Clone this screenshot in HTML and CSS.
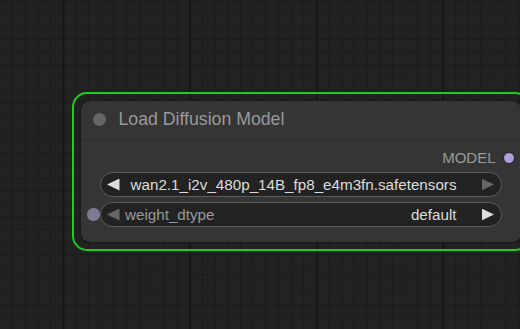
FILE: index.html
```html
<!DOCTYPE html>
<html lang="en">
<head>
    <meta charset="UTF-8">
    <meta name="viewport" content="width=device-width, initial-scale=1.0">
    <title>Load Diffusion Model</title>
    <link rel="stylesheet" href="styles.css">
</head>
<body>
    <div class="canvas">
        <div class="node running">
            <div class="node-title">
                <span class="title-dot"></span>
                <span class="title-text">Load Diffusion Model</span>
            </div>

            <div class="outputs">
                <span class="slot-label">MODEL</span>
                <span class="slot-out model"></span>
            </div>

            <div class="widgets">
                <div class="combo">
                    <span class="arrow left"></span>
                    <span class="combo-label"></span>
                    <span class="combo-value">wan2.1_i2v_480p_14B_fp8_e4m3fn.safetensors</span>
                    <span class="arrow right off"></span>
                </div>
                <div class="combo">
                    <span class="slot-in"></span>
                    <span class="arrow left off"></span>
                    <span class="combo-label">weight_dtype</span>
                    <span class="combo-value">default</span>
                    <span class="arrow right"></span>
                </div>
            </div>
        </div>
    </div>
</body>
</html>
```

FILE: styles.css
```css
html, body {
    margin: 0;
    padding: 0;
    height: 100%;
    overflow: hidden;
}
body {
    font-family: "Liberation Sans", Arial, sans-serif;
    background-color: #222;
}
.canvas {
    position: relative;
    width: 100%;
    height: 100%;
    background-color: #222;
    background-image:
        linear-gradient(to right, #171717 2px, transparent 2px),
        linear-gradient(to right, #1b1b1b 1px, transparent 1px),
        linear-gradient(to bottom, #1b1b1b 1px, transparent 1px);
    background-size: 126.667px 126.667px, 12.667px 12.667px, 12.667px 12.667px;
    background-position: 62.5px 0, -0.5px 0, 0 1px;
}

/* node sits on the graph canvas */
.node {
    position: absolute;
    left: 80.5px;
    top: 101px;
    width: 440px;
    height: 141px;
    box-sizing: border-box;
    background: #353535;
    border-radius: 9px;
    box-shadow: 0 0 3px rgba(0,0,0,0.5);
}
.node.running::before {
    content: "";
    position: absolute;
    left: -9px;
    top: -9px;
    right: -9px;
    bottom: -9px;
    border: 2px solid #1fcc1f;
    border-radius: 15px;
    pointer-events: none;
}
.node-title {
    height: 39px;
    box-sizing: border-box;
    border-bottom: 1px solid #2b2b2b;
    display: flex;
    align-items: center;
    padding-left: 12px;
    padding-bottom: 1px;
}
.title-dot {
    width: 13px;
    height: 13px;
    border-radius: 50%;
    background: #666;
}
.title-text {
    margin-left: 13px;
    color: #999;
    font-size: 17.7px;
}

.outputs {
    height: 25px;
    margin-top: 5px;
    padding-right: 5.5px;
    display: flex;
    align-items: center;
    justify-content: flex-end;
}
.slot-label {
    color: #999;
    font-size: 15px;
}
.slot-out {
    width: 10px;
    height: 10px;
    margin-left: 7.5px;
    border-radius: 50%;
    border: 1.5px solid #1e1e1e;
}
.slot-out.model { background: #b39ddb; }

.widgets {
    margin-top: 2px;
    padding: 0 19px;
    display: flex;
    flex-direction: column;
    gap: 5px;
}
.combo {
    position: relative;
    height: 25px;
    box-sizing: border-box;
    border: 1px solid #5c5c5c;
    border-radius: 12.5px;
    background: #222;
    display: flex;
    align-items: center;
    padding: 0 6.5px;
    font-size: 15.2px;
}
.combo-label {
    flex: 1;
    margin-left: 5.5px;
    color: #999;
    white-space: nowrap;
}
.combo-value {
    color: #ddd;
    white-space: nowrap;
    margin-right: 25px;
}
.arrow {
    width: 12.5px;
    height: 12px;
    background: #ddd;
}
.arrow.left { clip-path: polygon(100% 0, 0 50%, 100% 100%); }
.arrow.right { clip-path: polygon(0 0, 100% 50%, 0 100%); }
.arrow.off { background: #666; }

/* input slot sits over the widget edge */
.slot-in {
    position: absolute;
    left: -13.5px;
    top: 50%;
    width: 12.5px;
    height: 12.5px;
    margin-top: -6.25px;
    border-radius: 50%;
    background: #7d7b96;
}
```
